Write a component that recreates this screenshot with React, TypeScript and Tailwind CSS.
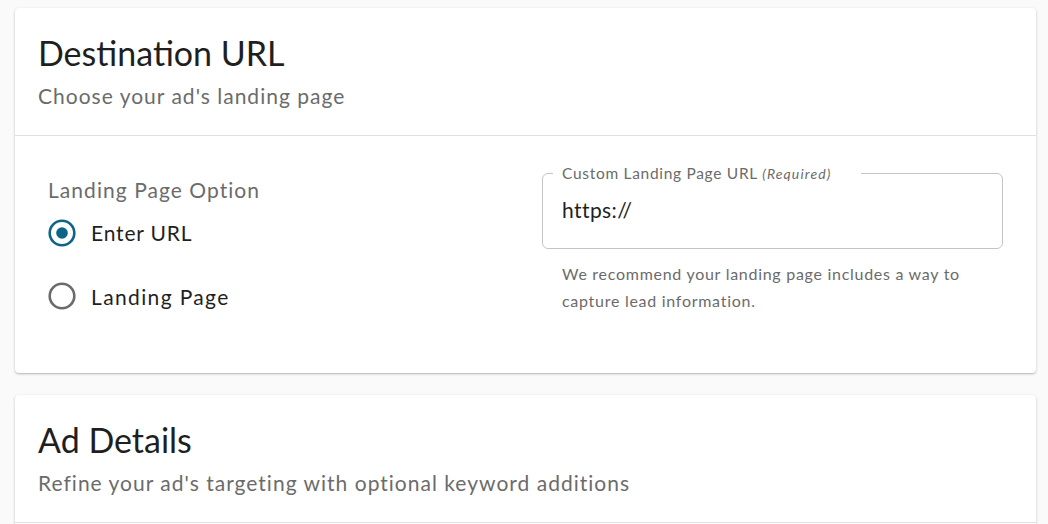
import { useState } from "react";

const font = { fontFamily: "Lato, 'Noto Sans', sans-serif" };

const Radio = ({ checked }: { checked: boolean }) => (
  <svg width="28" height="28" viewBox="0 0 28 28" className="shrink-0">
    <circle
      cx="14"
      cy="14"
      r="12.3"
      fill="none"
      stroke={checked ? "#0d6488" : "#6b6b6b"}
      strokeWidth="2.6"
    />
    {checked && <circle cx="14" cy="14" r="5.8" fill="#0d6488" />}
  </svg>
);

const CardHeader = ({ title, subtitle }: { title: string; subtitle: string }) => (
  <div className="px-[23px] pt-[24px] pb-[25px] border-b border-[#e0e0e0]">
    <h2 className="text-[34px] leading-[42px] text-[#1f1f1f]">{title}</h2>
    <p className="mt-[8px] text-[21px] leading-[28px] tracking-[0.048em] text-[#6b6b6b]">{subtitle}</p>
  </div>
);

export default function App() {
  const [option, setOption] = useState("url");

  return (
    <div className="min-h-screen bg-[#fafafa] pl-[15px] pr-[12px] pt-[8px] flex flex-col gap-[22px]" style={font}>
      {/* Destination URL */}
      <div className="bg-white rounded-[4px] shadow-[0_1px_3px_rgba(0,0,0,0.2),0_1px_1px_rgba(0,0,0,0.1)]">
        <CardHeader title="Destination URL" subtitle="Choose your ad's landing page" />
        <div className="flex px-[33px] h-[237px]">
          <div className="w-[494px] pt-[40px]">
            <div className="text-[21px] leading-[28px] tracking-[0.05em] text-[#6b6b6b]">Landing Page Option</div>
            <div className="mt-[13px] flex flex-col gap-[32px]">
              <button className="flex items-center gap-[15px]" onClick={() => setOption("url")}>
                <Radio checked={option === "url"} />
                <span className="text-[21px] tracking-[0.04em] text-[#1f1f1f]">Enter URL</span>
              </button>
              <button className="flex items-center gap-[15px]" onClick={() => setOption("page")}>
                <Radio checked={option === "page"} />
                <span className="text-[21px] tracking-[0.065em] text-[#1f1f1f]">Landing Page</span>
              </button>
            </div>
          </div>
          <div className="flex-1 pt-[37px]">
            <fieldset className="border border-[#c4c4c4] rounded-[6px] h-[86px] px-[10px] pb-[10px] -mt-[10px]">
              <legend className="px-[9px] pr-[30px] text-[15.5px] leading-[20px] tracking-[0.045em] text-[#6b6b6b]">
                Custom Landing Page URL{" "}
                <span className="italic text-[14px] tracking-[0.08em]">(Required)</span>
              </legend>
              <input
                className="w-full outline-none text-[21px] text-[#1f1f1f] mt-[10px] pl-[9px] tracking-[0.02em]"
                style={font}
                defaultValue="https://"
              />
            </fieldset>
            <p className="mt-[11px] pl-[20px] pr-[30px] text-[16px] leading-[27px] tracking-[0.045em] text-[#6b6b6b]">
              We recommend your landing page includes a way to capture lead information.
            </p>
          </div>
        </div>
      </div>

      {/* Ad Details */}
      <div className="bg-white rounded-[4px] shadow-[0_1px_3px_rgba(0,0,0,0.2),0_1px_1px_rgba(0,0,0,0.1)]">
        <CardHeader
          title="Ad Details"
          subtitle="Refine your ad's targeting with optional keyword additions"
        />
        <div className="h-[200px]" />
      </div>
    </div>
  );
}
